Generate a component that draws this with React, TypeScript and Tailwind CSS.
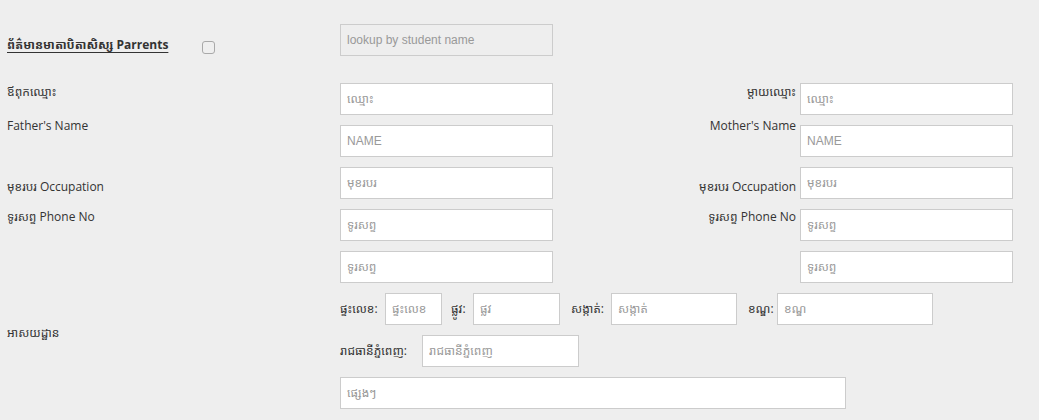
import React from "react";

const field =
  "h-[32px] border border-[#cccccc] bg-white px-[6px] text-[12px] font-['Liberation_Sans','Noto_Sans_Khmer','Khmer_OS',sans-serif] text-[#333] outline-none placeholder:text-[#999999]";

function Field({ placeholder, className = "" }: { placeholder: string; className?: string }) {
  return <input type="text" placeholder={placeholder} className={`${field} ${className}`} />;
}

const rows = [
  { left: "ឪពុកឈ្មោះ", right: "ម្តាយឈ្មោះ", ph: "ឈ្មោះ", shift: "mt-0" },
  { left: "Father's Name", right: "Mother's Name", ph: "NAME", shift: "-mt-[8px]" },
  { left: "មុខរបរ Occupation", right: "មុខរបរ Occupation", ph: "មុខរបរ", shift: "mt-[11px]" },
  { left: "ទូរសព្ទ Phone No", right: "ទូរសព្ទ Phone No", ph: "ទូរសព្ទ", shift: "-mt-[1px]" },
  { left: "", right: "", ph: "ទូរសព្ទ", shift: "mt-0" },
];

export default function App() {
  return (
    <div className="min-h-[420px] w-full bg-[#eeeeee] pt-[24px] font-['Open_Sans','Noto_Sans_Khmer','Khmer_OS',sans-serif] text-[12px] leading-[18px] text-[#333]">
      {/* header */}
      <div className="flex h-[32px]">
        <div className="flex w-[340px] items-center pl-[7px] pt-[10px]">
          <div className="w-[195px]">
            <span className="font-bold underline underline-offset-[3px]">ព័ត៌មានមាតាបិតាសិស្ស Parrents</span>
          </div>
          <input
            type="checkbox"
            className="mt-[4px] h-[13px] w-[13px] appearance-none rounded-[3px] border border-[#a9a9a9] bg-[#efefef]"
          />
        </div>
        <Field
          placeholder="lookup by student name"
          className="w-[213px] !bg-[#eeeeee]"
        />
      </div>

      {/* parents */}
      <div className="mt-[27px] grid grid-cols-[340px_213px_247px_213px] gap-y-[10px]">
        {rows.map((r, i) => (
          <React.Fragment key={i}>
            <div className={`pl-[7px] ${r.shift}`}>{r.left}</div>
            <Field placeholder={r.ph} />
            <div className={`pr-[4px] text-right ${r.shift}`}>{r.right}</div>
            <Field placeholder={r.ph} />
          </React.Fragment>
        ))}
      </div>

      {/* address */}
      <div className="mt-[10px] flex">
        <div className="w-[340px] pl-[7px] pt-[31px]">អាសយដ្ឋាន</div>
        <div className="flex flex-col gap-[10px]">
          <div className="flex items-center">
            <span className="w-[45px]">ផ្ទះលេខ:</span>
            <Field placeholder="ផ្ទះលេខ" className="w-[57px]" />
            <span className="ml-[9px] w-[22px]">ផ្លូវ:</span>
            <Field placeholder="ផ្លូវ" className="w-[87px]" />
            <span className="ml-[11px] w-[40px]">សង្កាត់:</span>
            <Field placeholder="សង្កាត់" className="w-[126px]" />
            <span className="ml-[11px] w-[29px]">ខណ្ឌ:</span>
            <Field placeholder="ខណ្ឌ" className="w-[156px]" />
          </div>
          <div className="flex items-center">
            <span className="w-[82px]">រាជធានីភ្នំពេញ:</span>
            <Field placeholder="រាជធានីភ្នំពេញ" className="w-[157px]" />
          </div>
          <Field placeholder="ផ្សេងៗ" className="w-[506px]" />
        </div>
      </div>
    </div>
  );
}
